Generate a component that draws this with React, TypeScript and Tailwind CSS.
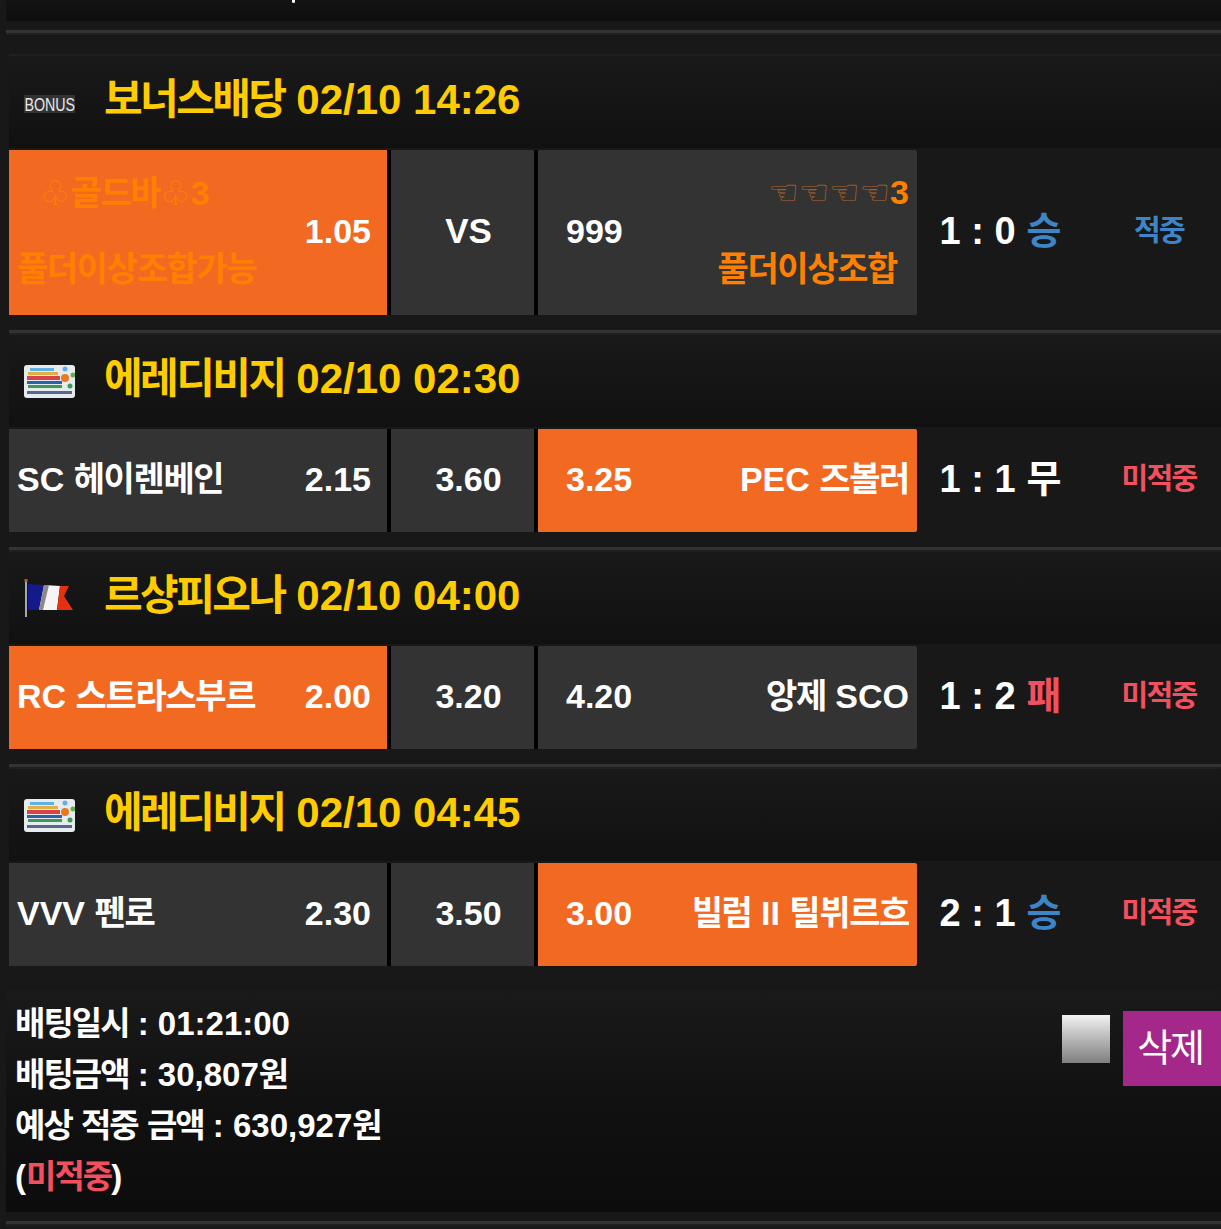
import type { ReactNode } from 'react'

const K = ({ children, className = '' }: { children: ReactNode; className?: string }) => (
  <span className={`tracking-[-0.06em] ${className}`}>{children}</span>
)

// team names sit a little looser than the headings
const N = ({ children, className = '' }: { children: ReactNode; className?: string }) => (
  <span className={`tracking-[-0.04em] ${className}`}>{children}</span>
)

function LeagueFlag() {
  return (
    <svg width="51" height="33" viewBox="0 0 51 33">
      <rect width="51" height="33" rx="3" fill="#e6ebee" />
      <rect x="6" y="3" width="24" height="3" fill="#62b0e8" />
      <rect x="4" y="7" width="30" height="3" fill="#e0b040" />
      <rect x="3" y="11" width="33" height="4" fill="#d8424a" />
      <rect x="3" y="16" width="35" height="3" fill="#2f5fa8" />
      <rect x="4" y="20" width="34" height="3" fill="#3a9a58" />
      <circle cx="41" cy="13" r="4" fill="#e8791f" />
      <circle cx="41" cy="4" r="2.5" fill="#62b0e8" />
      <circle cx="49" cy="10" r="2.5" fill="#63b04a" />
      <circle cx="46" cy="21" r="2.5" fill="#3a9a58" />
      <rect x="3" y="26" width="45" height="3" fill="#56668e" />
    </svg>
  )
}

function FranceFlag() {
  return (
    <svg width="51" height="38" viewBox="0 0 51 38">
      <rect x="1" y="2" width="2" height="36" fill="#a8a8a8" />
      <rect x="0.5" y="0" width="3" height="3" fill="#a0682c" />
      <path d="M4 5 L20 6 L15 31 L4 31 Z" fill="#141a8c" />
      <path d="M20 6 L36 7 L33 31 L15 31 Z" fill="#f5f5f5" />
      <path d="M20 6 L25 6 L19 31 L15 31 Z" fill="#8a8a8a" />
      <path d="M36 7 L45 7 L40 17 L49 31 L33 31 Z" fill="#e4320f" />
    </svg>
  )
}

function BonusLogo() {
  return (
    <div className="mt-[4px] w-[51px] h-[18px] bg-[#333333] flex items-center justify-center overflow-hidden">
      <span className="text-[19px] leading-none text-[#e8e8e8] font-normal whitespace-nowrap scale-x-75">
        BONUS
      </span>
    </div>
  )
}

type Match = {
  icon: ReactNode
  league: string
  time: string
  home: ReactNode
  homeOdds: string
  draw: string
  awayOdds: string
  away: ReactNode
  pick: 'home' | 'away'
  score: string
  outcome: string
  outcomeClass: string
  result: string
  resultClass: string
}

const BLUE = 'text-[#3d85c6]'
const RED = 'text-[#f2505f]'

const matches: Match[] = [
  {
    icon: <LeagueFlag />,
    league: '에레디비지',
    time: '02/10 02:30',
    home: <>SC <N>헤이렌베인</N></>,
    homeOdds: '2.15',
    draw: '3.60',
    awayOdds: '3.25',
    away: <>PEC <N>즈볼러</N></>,
    pick: 'away',
    score: '1 : 1',
    outcome: '무',
    outcomeClass: 'text-white',
    result: '미적중',
    resultClass: RED,
  },
  {
    icon: <FranceFlag />,
    league: '르샹피오나',
    time: '02/10 04:00',
    home: <>RC <N>스트라스부르</N></>,
    homeOdds: '2.00',
    draw: '3.20',
    awayOdds: '4.20',
    away: <><N>앙제</N> SCO</>,
    pick: 'home',
    score: '1 : 2',
    outcome: '패',
    outcomeClass: RED,
    result: '미적중',
    resultClass: RED,
  },
  {
    icon: <LeagueFlag />,
    league: '에레디비지',
    time: '02/10 04:45',
    home: <>VVV <N>펜로</N></>,
    homeOdds: '2.30',
    draw: '3.50',
    awayOdds: '3.00',
    away: <><N>빌럼</N> II <N>틸뷔르흐</N></>,
    pick: 'away',
    score: '2 : 1',
    outcome: '승',
    outcomeClass: BLUE,
    result: '미적중',
    resultClass: RED,
  },
]

function Header({ icon, league, time }: { icon: ReactNode; league: string; time: string }) {
  return (
    <div className="h-[92px] ml-[3px] flex items-center bg-gradient-to-b from-[#191919] to-[#111111]">
      <div className="w-[51px] ml-[15px] flex justify-center">{icon}</div>
      <div className="ml-[29px] mb-[4px] text-[42px] leading-none font-bold text-[#ffcc00] whitespace-nowrap">
        <K>{league}</K> {time}
      </div>
    </div>
  )
}

function ScoreCols({ score, outcome, outcomeClass, result, resultClass }: Pick<Match, 'score' | 'outcome' | 'outcomeClass' | 'result' | 'resultClass'>) {
  return (
    <>
      <div className="w-[167px] pb-[2px] flex items-center justify-center text-[38px] font-bold text-white whitespace-nowrap">
        <span>{score}</span>
        <span className={`ml-[11px] ${outcomeClass}`}>{outcome}</span>
      </div>
      <div className={`flex-1 pl-[13px] pb-[2px] flex items-center justify-center text-[29px] font-bold whitespace-nowrap ${resultClass}`}>
        <K>{result}</K>
      </div>
    </>
  )
}

function MatchRow({ m }: { m: Match }) {
  const homeBg = m.pick === 'home' ? 'bg-[#f26922]' : 'bg-[#333333]'
  const awayBg = m.pick === 'away' ? 'bg-[#f26922]' : 'bg-[#333333]'
  return (
    <div className="ml-[3px] h-[103px] flex">
      <div className={`w-[378px] ${homeBg} flex items-center justify-between pl-[8px] pr-[16px] pb-[2px] text-[34px] font-bold text-white whitespace-nowrap`}>
        <span>{m.home}</span>
        <span>{m.homeOdds}</span>
      </div>
      <div className="w-[4px] bg-black" />
      <div className="w-[143px] bg-[#333333] pl-[12px] pb-[2px] flex items-center justify-center text-[34px] font-bold text-white">
        {m.draw}
      </div>
      <div className="w-[4px] bg-black" />
      <div className={`w-[379px] ${awayBg} rounded-r-[2px] flex items-center justify-between pl-[28px] pr-[8px] pb-[2px] text-[34px] font-bold text-white whitespace-nowrap`}>
        <span>{m.awayOdds}</span>
        <span>{m.away}</span>
      </div>
      <ScoreCols {...m} />
    </div>
  )
}

function Divider({ inset = false }: { inset?: boolean }) {
  return (
    <div className={inset ? 'ml-[3px]' : ''}>
      <div className="h-[3px] bg-[#333333]" />
      <div className="h-[2px] bg-[#202020]" />
    </div>
  )
}

export default function App() {
  return (
    <div className="h-[1229px] w-[1221px] overflow-hidden bg-[#181818] pl-[6px] font-['Liberation_Sans','Noto_Sans_CJK_KR',sans-serif]">
      <div className="relative h-[21px] overflow-hidden bg-gradient-to-b from-[#131313] to-[#0e0e0e]">
        <div className="absolute left-[286px] top-0 w-[3px] h-[3px] rounded-b-[2px] bg-white" />
      </div>
      <div className="h-[9px]" />
      <Divider />

      {/* bonus row */}
      <div className="h-[19px]" />
      <div className="ml-[3px] h-[2px] bg-[#202020]" />
      <Header icon={<BonusLogo />} league="보너스배당" time="02/10 14:26" />
      <div className="h-[2px]" />
      <div className="ml-[3px] h-[165px] flex">
        <div className="w-[378px] bg-[#f26922] flex items-center pl-[8px] pr-[16px] pb-[2px] text-[34px] font-bold whitespace-nowrap">
          <div className="w-[248px] flex flex-col leading-[74px] text-[#ff8000]">
            <span className="h-[74px] pl-[23px] pb-[4px] flex items-center">
              <span className="font-['DejaVu_Sans',sans-serif] font-normal text-[34px] leading-none">♧</span>
              <N>골드바</N>
              <span className="font-['DejaVu_Sans',sans-serif] font-normal text-[34px] leading-none">♧</span>3
            </span>
            <N>풀더이상조합가능</N>
          </div>
          <span className="ml-auto text-white">1.05</span>
        </div>
        <div className="w-[4px] bg-black" />
        <div className="w-[143px] bg-[#333333] pl-[12px] pb-[2px] flex items-center justify-center text-[35px] font-bold text-white">VS</div>
        <div className="w-[4px] bg-black" />
        <div className="w-[379px] bg-[#333333] rounded-r-[2px] flex items-center justify-between pl-[28px] pr-[8px] pb-[2px] text-[34px] font-bold whitespace-nowrap">
          <span className="text-white">999</span>
          <div className="flex flex-col items-end leading-[74px] text-[#ff8000]">
            <span className="h-[74px] pb-[6px] flex items-center">
              <span className="font-['DejaVu_Sans',sans-serif] font-normal text-[34px] leading-none text-[#b0662a]">☜☜☜☜</span>
              3
            </span>
            <N className="pr-[12px]">풀더이상조합</N>
          </div>
        </div>
        <ScoreCols score="1 : 0" outcome="승" outcomeClass={BLUE} result="적중" resultClass={BLUE} />
      </div>
      <div className="h-[15px]" />

      {matches.map((m) => (
        <div key={m.time}>
          <Divider inset />
          <Header icon={m.icon} league={m.league} time={m.time} />
          <div className="h-[2px]" />
          <MatchRow m={m} />
          <div className="h-[15px]" />
        </div>
      ))}

      {/* bet summary */}
      <div className="h-[9px]" />
      <div className="h-[222px] flex justify-between bg-gradient-to-b from-[#1a1a1a] via-[#111111] to-[#0c0c0c]">
        <div className="pl-[9px] pt-[8px] text-[33px] leading-[51px] font-bold text-white whitespace-nowrap">
          <div><K>배팅일시</K> : 01:21:00</div>
          <div><K>배팅금액</K> : 30,807<K>원</K></div>
          <div><K className="[word-spacing:2px]">예상 적중 금액</K> : 630,927<K>원</K></div>
          <div>(<K className="text-[#f2505f]">미적중</K>)</div>
        </div>
        <div className="flex items-start pt-[21px]">
          <div className="mt-[4px] w-[48px] h-[48px] bg-gradient-to-b from-[#f2f2f2] to-[#808080]" />
          <div className="ml-[13px] w-[98px] h-[75px] bg-[#a4278a] pr-[4px] flex items-center justify-center text-[38px] text-white">
            <K>삭제</K>
          </div>
        </div>
      </div>
      <div className="h-[9px]" />
      <Divider />
    </div>
  )
}
